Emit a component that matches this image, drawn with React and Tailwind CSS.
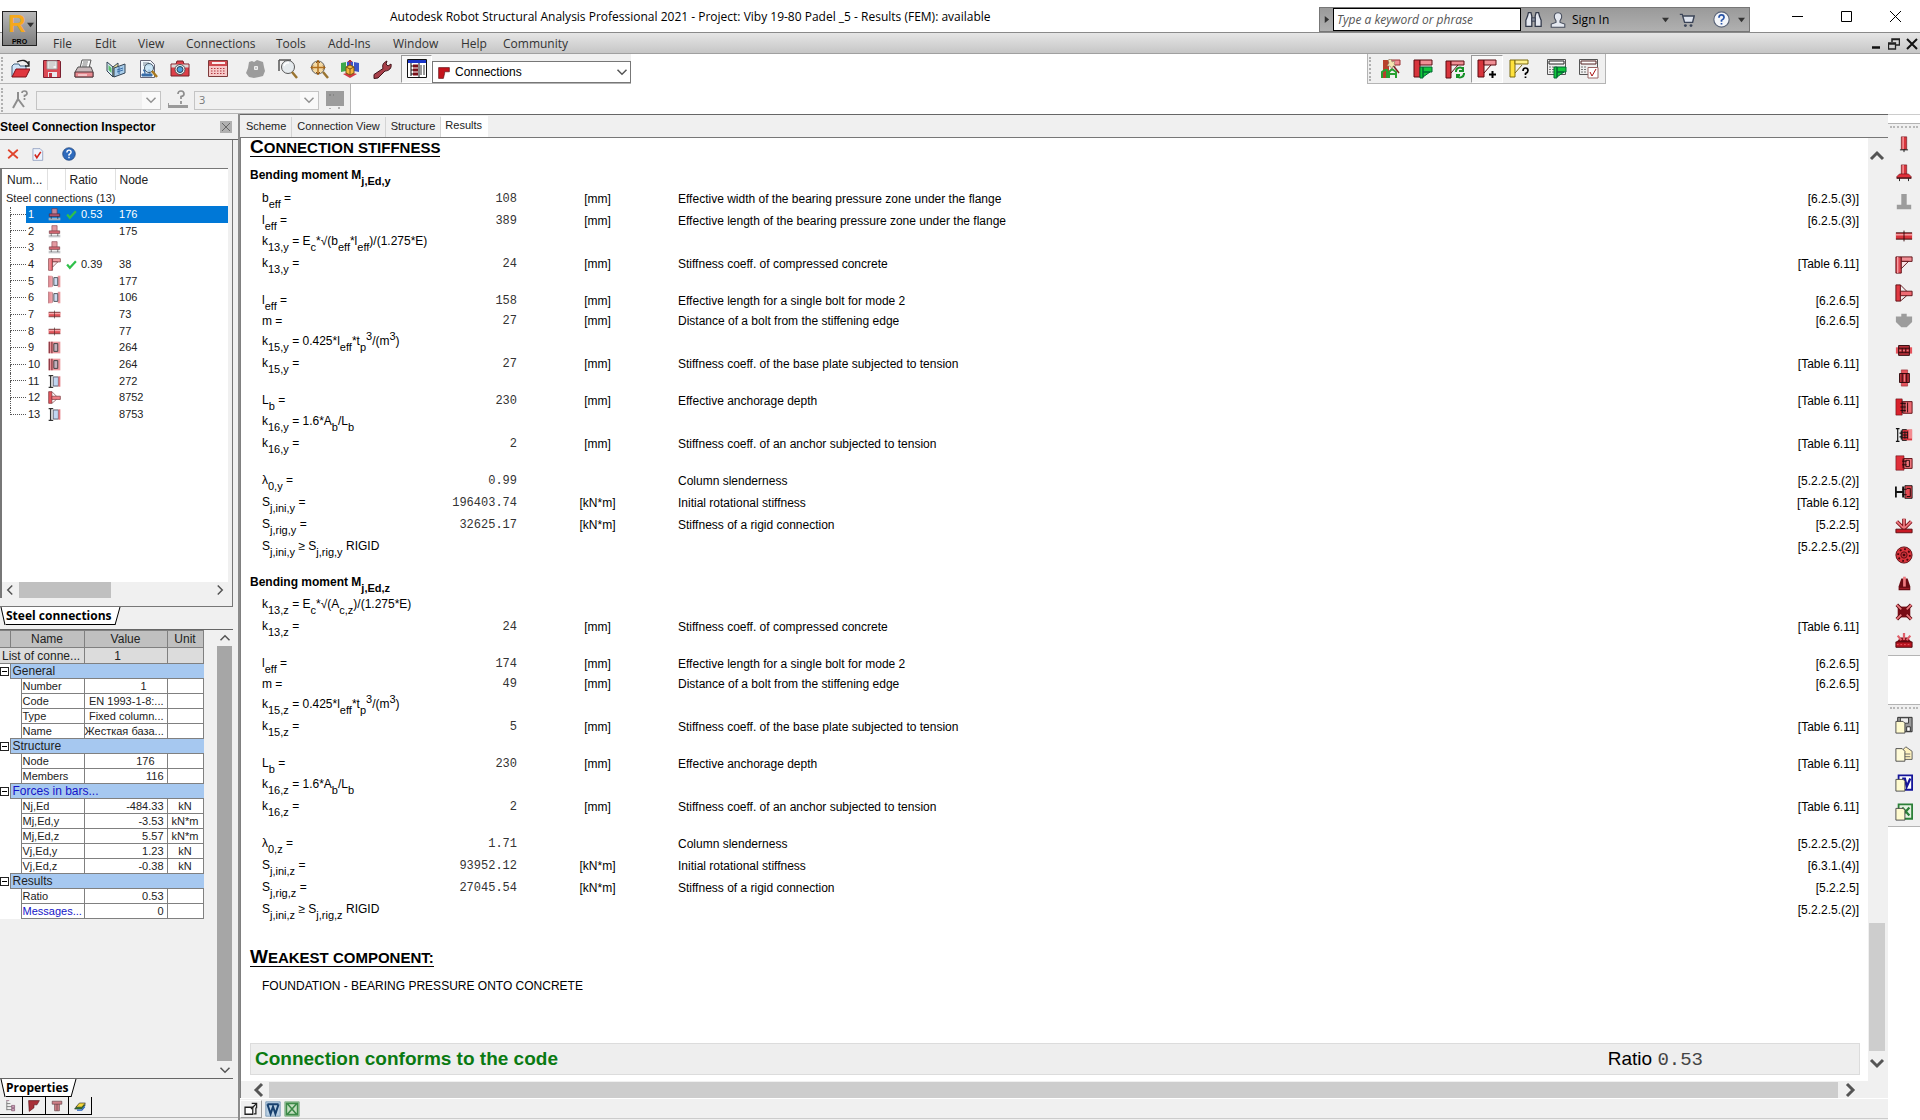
import React from 'react';

// ---------------------------------------------------------------- icons

const RED = '#d8343c';
const DARK = '#5a0a10';

const ICONS = {
  open: (
    <>
      <path d="M2 18V7l2-2h5l1 2h6v4" fill="#cfe4f7" stroke="#44617f" />
      <path d="M2 18l4-8h14l-4 8z" fill="#e0363e" stroke="#7a1018" />
      <path d="M7 3c5-3 10-2 12 3m0-4v5h-4" fill="none" stroke="#222" strokeWidth="1.3" />
    </>
  ),
  save: (
    <>
      <path d="M1.500 1.500h16l1 1v16h-17z" fill="#dc4a55" stroke="#7a2030" />
      <path d="M5 2h10v8H5z" fill="#f4f4f4" stroke="#999" />
      <path d="M6.500 4h7M6.500 6h7M6.500 8h5" stroke="#b0b0b0" />
      <path d="M6 13h9v5H6z" fill="#e8e8ee" />
      <path d="M7 14h3v4H7z" fill="#c03040" />
    </>
  ),
  print: (
    <>
      <path d="M6 9l2-8h9l-2 8z" fill="#fff" stroke="#555" />
      <path d="M9 3h5M8.500 5h5M8 7h5" stroke="#777" />
      <path d="M1 13l3-5h13l2 5v5H1z" fill="#c9b9bb" stroke="#555" />
      <path d="M1 13h18v5H1z" fill="#e88a90" stroke="#553338" />
      <path d="M4 16h9" stroke="#fff" />
    </>
  ),
  book: (
    <>
      <path d="M1 3l6 5v10l-6-6z" fill="#d7e9f5" stroke="#345" />
      <path d="M2.500 6l3 3v5l-3-3z" fill="#5cc06a" />
      <path d="M7 8l5-4v10l-5 4z" fill="#f4e49a" stroke="#345" />
      <path d="M8 9l11-4v9L8 18z" fill="#a9cdea" stroke="#345" />
      <path d="M11 11l6-2M11 13l6-2M13 8v7" stroke="#3a6ea8" />
    </>
  ),
  preview: (
    <>
      <path d="M2.500 1.500h10l4 4v13h-14z" fill="#f3f8fd" stroke="#667" />
      <path d="M5 4h6M5 6h8" stroke="#789" />
      <path d="M4 15h10v2H4zM5 11h2v4M10 11h2v4" fill="#3a6ea8" stroke="#3a6ea8" />
      <circle cx="11" cy="9" r="4.500" fill="#bfe0f5" fillOpacity=".8" stroke="#456" />
      <path d="M14 12l5 6" stroke="#a8781e" strokeWidth="2.500" />
    </>
  ),
  camera: (
    <>
      <path d="M1 5h5l1-3h6l1 3h5v12H1z" fill="#dd4049" stroke="#752028" />
      <path d="M1.500 5.500h17v3h-17z" fill="#d9d9d9" />
      <circle cx="10" cy="10.500" r="5" fill="#e9eef4" stroke="#555" />
      <circle cx="10" cy="10.500" r="3" fill="#4ea0dc" stroke="#245" />
    </>
  ),
  calc: (
    <>
      <path d="M.5 1.500h19v16H.5z" fill="#f6c9c9" stroke="#7c3a3a" />
      <path d="M1 2h18v5H1z" fill="#d04a50" />
      <path d="M4 3h13v2H4z" fill="#fbeeee" />
      <path d="M3 9.500h14M3 12h14M3 14.500h14" stroke="#b23840" strokeDasharray="1.500 1.500" />
    </>
  ),
  greyBlock: (
    <>
      <path d="M3 3l3-1 2 1 3-2 3 1 3 1 1 5 1 4-2 5-4 1-5 1-5-1-3-4 2-5z" fill="#9c9c9c" />
      <path d="M8.500 7.500h3v3h-3z" fill="#c9c9c9" stroke="#efefef" />
    </>
  ),
  lens: (
    <>
      <path d="M1 1h12M1 1v11" stroke="#555" strokeWidth="1.500" />
      <circle cx="10" cy="8" r="6.500" fill="#e6ebee" stroke="#555" />
      <path d="M6 7a4 4 0 0 1 5-3" fill="none" stroke="#fff" strokeWidth="1.500" />
      <path d="M14 13l5 6" stroke="#9a7430" strokeWidth="2.500" />
    </>
  ),
  target: (
    <>
      <circle cx="9" cy="8.500" r="6.500" fill="#f3d9a4" stroke="#666" />
      <path d="M9 1v15M2 8.500h14" stroke="#b3701c" strokeWidth="1.500" />
      <path d="M7 4l2-2 2 2M7 13l2 2 2-2M4 6.500l-2 2 2 2M14 6.500l2 2-2 2" fill="none" stroke="#8a5010" />
      <path d="M14 13l5 6" stroke="#9a7430" strokeWidth="2.500" />
    </>
  ),
  cube: (
    <>
      <path d="M1 4l5-1v9l-5 1z" fill="#3ea84c" />
      <path d="M14 3l5 1v9l-5-1z" fill="#3a55c8" />
      <path d="M7 3l3-2 3 2v5H7z" fill="#3a55c8" />
      <path d="M3 15l7-2 7 2-7 4z" fill="#d33a44" />
      <path d="M6 8l4-2 4 2v6l-4 2-4-2z" fill="#f5b63c" stroke="#7a5410" />
      <path d="M6 8l4 2 4-2M10 10v6" fill="none" stroke="#7a5410" />
      <path d="M10 6V1M8 3l2-2 2 2" stroke="#c22" fill="none" />
    </>
  ),
  wrench: (
    <path
      d="M11 9.500c-1-3 0-6 4-7.500l-1 3 2 2 3-2c1 4-2 7-6 7l-7 7-4 .5v-4z"
      fill="#a8404a"
      stroke="#3f1218"
    />
  ),
  inspector: (
    <>
      <path d="M.5.500h19v18H.5z" fill="#fff" stroke="#111" />
      <path d="M1 1h18v3H1z" fill="#1a35c8" />
      <path d="M4 4v13M4 7h3M4 11h3M4 15h3" stroke="#111" fill="none" />
      <path d="M6 5.500h5v3H6zM6 9.500h5v3H6zM6 13.500h5v3H6z" fill="#7a1018" />
      <path d="M13 7h5M13 9h5M13 11h5M13 13h5M13 15h5" stroke="#333" strokeDasharray="2 1" />
      <path d="M12 4v15" stroke="#111" />
    </>
  ),
  knee: (
    <>
      <path d="M1 1h6v18H1z" fill="#e04a54" stroke={DARK} />
      <path d="M7 1h12v5H7z" fill="#f08f95" stroke={DARK} />
      <path d="M7 14l8-8H7z" fill="#fbe4e5" stroke={DARK} />
      <path d="M3 1v18" stroke="#f6a0a5" strokeWidth="1.500" />
    </>
  ),
  kneeAuto: (
    <>
      <path d="M2 1h6v18H2z" fill="#b8402c" />
      <path d="M8 1h11v5H8z" fill="#f08f95" stroke="#933" />
      <path d="M1 19v-6l3-2h2v8M8 19v-6l3-3 4 3v6M8 15h7" fill="none" stroke="#28a030" strokeWidth="2" />
      <path d="M11 5l7 9" stroke="#7c2020" strokeWidth="1.500" />
      <path d="M10 0l1 3 3-1-1 3 2 2-3 0-1 3-2-3-3 0 2-3-1-3z" fill="#f4e7b0" stroke="#876" strokeWidth=".6" />
    </>
  ),
  kneeGreen: (
    <>
      <path d="M1 1h6v17H1z" fill={RED} stroke={DARK} />
      <path d="M7 1h12v5H7z" fill="#f08f95" stroke={DARK} />
      <path d="M7 8h3v11H7zM10 8h9v5h-9zM10 18l7-5h-7z" fill="#12c83c" stroke="#063" />
    </>
  ),
  kneeRefresh: (
    <>
      <path d="M1 2h5v17H1z" fill={RED} stroke={DARK} />
      <path d="M6 2h13v4H6zM6 14l7-8" fill="#f08f95" stroke={DARK} />
      <path d="M11 13a4 4 0 0 1 7-3m0-2v4h-4M19 14a4 4 0 0 1-7 3m0 2v-3h3" fill="none" stroke="#169128" strokeWidth="2" />
    </>
  ),
  kneePlus: (
    <>
      <path d="M1 1h6v17H1z" fill={RED} stroke={DARK} />
      <path d="M7 1h12v5H7zM7 14l7-8" fill="#f08f95" stroke={DARK} />
      <path d="M15.500 12v7M12 15.500h7" stroke="#000" strokeWidth="2" />
    </>
  ),
  kneeHelp: (
    <>
      <path d="M1 1h5v17H1z" fill="#ffe23c" stroke="#7a6a10" />
      <path d="M6 1h13v4H6zM6 14l7-8" fill="#fff08a" stroke="#7a6a10" />
      <path d="M14 12q0-3 2.500-3T19 11.500q0 2-2.500 3V16M16.500 17.500V19" fill="none" stroke="#000" strokeWidth="1.700" />
    </>
  ),
  calcGreen: (
    <>
      <path d="M.5.500h18v15H.5z" fill="#eee" stroke="#555" />
      <path d="M2 2h15v3H2z" fill="#fff" stroke="#222" />
      <path d="M2 8h8M2 10.500h6M2 13h6" stroke="#777" strokeDasharray="2 1" />
      <path d="M7 8h3v11H7zM10 8h9v5h-9zM10 18l7-5h-7z" fill="#12c83c" stroke="#063" />
    </>
  ),
  calcCheck: (
    <>
      <path d="M.5.500h18v15H.5z" fill="#eee" stroke="#555" />
      <path d="M2 2h15v3H2z" fill="#fff" stroke="#522" />
      <path d="M2 8h6M2 10.500h6M2 13h6" stroke="#777" strokeDasharray="2 1" />
      <path d="M9 8.500h10V19H9z" fill="#fff" stroke="#966" />
      <path d="M11 13l2 4 4-7" fill="none" stroke="#a11" />
    </>
  ),
  support: (
    <>
      <path d="M8 2v7M8 9l-5 9M8 9l6 8" stroke="#8d8d8d" strokeWidth="2" fill="none" />
      <path d="M12 3q0-2 2.500-2T17 3.500q0 1.500-2.500 2V7M14.500 8v2" fill="none" stroke="#8d8d8d" strokeWidth="1.700" />
    </>
  ),
  plate: (
    <>
      <path d="M0 15h20v3H0z" fill="#9a9a9a" />
      <path d="M10 4q0-3 3-3t3 3q0 2-3 2.500V9M13 11v3M0 13v3" fill="none" stroke="#8d8d8d" strokeWidth="1.700" />
    </>
  ),
  greySquare: (
    <>
      <path d="M1 1h18v15H1z" fill="#9c9c9c" />
      <path d="M4 5h2M8 5h1M5 18v1M14 17v2" stroke="#707070" />
    </>
  ),
  // right hand strip
  column: (
    <>
      <path d="M7 2h6v14H7z" fill={RED} stroke={DARK} strokeWidth=".6" />
      <path d="M9 2v14" stroke="#f7a0a4" strokeWidth="1.500" />
      <path d="M5.500 16.500h9M10 16v3" stroke="#111" />
    </>
  ),
  columnBase: (
    <>
      <path d="M7 1h6v11H7z" fill={RED} stroke={DARK} strokeWidth=".6" />
      <path d="M9 1v11" stroke="#f7a0a4" strokeWidth="1.500" />
      <path d="M2 14l3-3h10l3 3v2H2z" fill="#e0303a" stroke={DARK} strokeWidth=".6" />
      <path d="M2 15.500h16M5 16v3M15 16v3" stroke="#111" />
    </>
  ),
  greyTee: <path d="M7 1h6v12h5v5H2v-5h5z" fill="#9c9c9c" />,
  splice: (
    <>
      <path d="M1 6.500h18v7H1z" fill={RED} />
      <path d="M1 8.500h18" stroke="#f59a9e" strokeWidth="2" />
      <path d="M1 6.500h18M1 13.500h18M10 4v12" stroke="#300" />
    </>
  ),
  tee: (
    <>
      <path d="M1 1h5v18H1z" fill="#e03a42" stroke={DARK} />
      <path d="M6 8h13v5H6zM6 1l7 7M6 19l7-6" fill="#ee6a72" stroke={DARK} />
    </>
  ),
  greyTank: <path d="M7 2h6v3h6v6l-6 6H7l-6-6V5h6z" fill="#9c9c9c" />,
  pipeH: (
    <>
      <path d="M1 7h18v7H1z" fill="#e4545c" />
      <path d="M4 5h12v11H4z" fill="#b7313a" stroke="#2a0508" />
      <path d="M4 8h12M4 13h12M8 8v5M12 8v5" stroke="#2a0508" />
      <path d="M5 10.500h10" stroke="#f08a90" strokeDasharray="2 2" />
    </>
  ),
  pipeV: (
    <>
      <path d="M7 1h7v18H7z" fill="#e4545c" stroke="#8a2028" strokeWidth=".6" />
      <path d="M5 5h11v10H5z" fill="#b7313a" stroke="#2a0508" />
      <path d="M8 5v10M13 5v10" stroke="#2a0508" />
      <path d="M10.500 6v8" stroke="#f08a90" />
    </>
  ),
  webPlate: (
    <>
      <path d="M1 1h7v18H1z" fill="#d9222c" stroke={DARK} strokeWidth=".6" />
      <path d="M9 4h10v13H9z" fill="#ee6a72" stroke={DARK} />
      <path d="M8 3v14M11 5v11M14 5v11M6 6h6M6 10h6M6 14h6" stroke="#1a0305" />
    </>
  ),
  beamClip: (
    <>
      <path d="M3 3v14M1 3h4M1 17h4M7 5v10M5 8h6M5 12h6" stroke="#111" strokeWidth="1.300" />
      <path d="M8 4h11v12H8z" fill="#d9333c" />
      <path d="M8 4v12M11 6v8M8 4h5M8 16h5M8 7h6M8 10h6M8 13h6M14 6v8" stroke="#111" />
      <path d="M15 4h4v10h-4z" fill="#f38a8f" />
    </>
  ),
  endPlate: (
    <>
      <path d="M1 2h9v16H1z" fill="#e0303a" stroke={DARK} strokeWidth=".6" />
      <path d="M10 5h9v11h-9z" fill="#f0767d" stroke={DARK} />
      <path d="M9 5v11M12 7h4v7h-4zM8 8h5M8 12h5" stroke="#1a0305" fill="none" />
    </>
  ),
  hBeam: (
    <>
      <path d="M1 4v12M1 10h8M9 4v12" stroke="#111" strokeWidth="2" />
      <path d="M11 3h8v14h-8z" fill="#e64a52" stroke="#111" />
      <path d="M13 6h4v9h-4M8 7h5M8 13h5" stroke="#1a0305" fill="none" />
    </>
  ),
  fan: (
    <>
      <path d="M10 13V2M10 13L2 5M10 13l8-8" stroke="#7a0a12" strokeWidth="4" />
      <path d="M10 13V2M10 13L2 5M10 13l8-8" stroke="#ee7a80" strokeWidth="2" />
      <path d="M1 13.500h18v4H1z" fill="#c81a24" stroke={DARK} />
    </>
  ),
  flange: (
    <>
      <circle cx="10" cy="10" r="9" fill="#d9343c" stroke={DARK} />
      <circle cx="10" cy="10" r="6.500" fill="none" stroke="#4a060b" strokeWidth="2" strokeDasharray="2 3" />
      <circle cx="10" cy="10" r="3.500" fill="#c03038" stroke={DARK} />
      <circle cx="10" cy="10" r="1.500" fill="#4a060b" />
    </>
  ),
  pyramid: (
    <>
      <path d="M7 5h7l3 9v4H4v-4z" fill="#6a0c14" />
      <path d="M9 3h3v11H9z" fill="#ee7a80" />
      <path d="M5 16h11" stroke="#a8222c" />
    </>
  ),
  cross: (
    <>
      <path d="M3 4h14v12H3z" fill="#780c15" />
      <path d="M2 2l5 5M18 2l-5 5M2 18l5-5M18 18l-5-5" stroke="#5a0a10" strokeWidth="4" />
      <path d="M2 2l5 5M18 2l-5 5M2 18l5-5M18 18l-5-5" stroke="#ee7a80" strokeWidth="2" />
    </>
  ),
  dome: (
    <>
      <path d="M1 12l5-6h8l5 6z" fill="#780c15" />
      <path d="M10 9V1M7 9L3 4M13 9l4-5" stroke="#e0606a" strokeWidth="2.500" />
      <path d="M1 11h18v6H1z" fill="#b8141f" stroke="#4a060b" />
      <path d="M2 14h16" stroke="#ee6068" strokeDasharray="2 2" />
    </>
  ),
  pageSave: (
    <>
      <path d="M3 1.500h16v16H3z" fill="#9a9a9a" stroke="#222" />
      <path d="M6 2h9v6H6z" fill="#eee" stroke="#333" />
      <path d="M13 12h4v5h-4z" fill="#fff" stroke="#222" />
      <path d="M1 6h8l2 2v11H1z" fill="#fffbcf" stroke="#444" />
    </>
  ),
  pageMail: (
    <>
      <path d="M7 7l5-5 7 5v9H7z" fill="#fff3c0" stroke="#555" />
      <path d="M10 10h7M10 13h7" stroke="#666" />
      <path d="M1 4h7l3 3v11H1z" fill="#fffbd8" stroke="#444" />
    </>
  ),
  pageWord: (
    <>
      <path d="M4 1.500h15v16H4z" fill="#fff" stroke="#15159a" strokeWidth="2" />
      <path d="M8 5h3l2 9 4-9" fill="none" stroke="#15159a" strokeWidth="2.500" />
      <path d="M1 6h8l2 2v11H1z" fill="#fffbcf" stroke="#444" />
    </>
  ),
  pageExcel: (
    <>
      <path d="M4 1.500h15v16H4z" fill="#e6f2e2" stroke="#2c8038" strokeWidth="2" />
      <path d="M8 5l8 9M16 5l-8 9" stroke="#2c8038" strokeWidth="2.500" />
      <path d="M1 6h8l2 2v11H1z" fill="#fffbcf" stroke="#444" />
    </>
  ),
  // connection list
  base: (
    <>
      <path d="M6 1h8v9H6z" fill="#e08a92" stroke="#7c2a34" />
      <path d="M2 9h16v4H2z" fill="#d0505c" stroke="#5a1a22" />
      <path d="M1 15h18v4H1z" fill="#b9bcbf" />
      <path d="M5 13v4M15 13v4" stroke="#222" />
    </>
  ),
  clip: (
    <>
      <path d="M1 1h5v18H1zM15 1h4v18h-4z" fill="#e8868e" />
      <path d="M7 2v16M1 1v18" stroke="#8a2530" />
      <path d="M9 4h6v12H9z" fill="#c6d6f0" stroke="#33363f" strokeWidth="1.500" />
    </>
  ),
  clipDark: (
    <>
      <path d="M1 1h18v18H1z" fill="#e8868e" />
      <path d="M6 1v18M2 1v18" stroke="#7a1822" strokeWidth="2" />
      <path d="M9 4h6v12H9z" fill="#b9a4b4" stroke="#222" strokeWidth="1.500" />
    </>
  ),
  clipBeam: (
    <>
      <path d="M1 1h7M1 19h7M4 1v18" stroke="#111" strokeWidth="2" />
      <path d="M8 3h8v14H8z" fill="#b7d0f0" stroke="#445" strokeWidth="1.500" />
      <path d="M16 2h3v16h-3z" fill="#e0606a" />
    </>
  ),
  // inspector and window bits
  cross2: <path d="M2 3l16 14M18 3L2 17" stroke="#e0442c" strokeWidth="3" fill="none" />,
  docCheck: (
    <>
      <path d="M3 1h11l4 4v14H3z" fill="#eef3fc" stroke="#7486b0" />
      <path d="M6 10l3 5 6-9" fill="none" stroke="#d2261c" strokeWidth="2.500" />
    </>
  ),
  help: (
    <>
      <circle cx="10" cy="10" r="9" fill="#2f6bbd" stroke="#1c4076" />
      <path d="M7 8q0-3.500 3-3.500T13 7.500q0 1.500-3 3.500v1.500M10 14v2" fill="none" stroke="#fff" strokeWidth="2" />
    </>
  ),
  check: <path d="M2 10l5 6L18 4" fill="none" stroke="#2fc04a" strokeWidth="4" />,
  binoculars: (
    <>
      <path d="M3 6l1-4h3l1 4v12H1V11zM17 6l-1-4h-3l-1 4v12h7V11z" fill="#e4e8f0" stroke="#333a4a" strokeWidth="1.500" />
      <path d="M8 8h4v4H8z" fill="#8a90a0" stroke="#333a4a" />
    </>
  ),
  user: (
    <path
      d="M10 1c4 0 5 3 4.500 6-.5 2-1.500 3-2 4v2l6 2v4h-17v-4l6-2v-2c-.5-1-1.500-2-2-4C5 4 6 1 10 1z"
      fill="#e4e8f0"
      stroke="#444b5a"
      strokeWidth="1.300"
    />
  ),
  cart: (
    <>
      <path d="M1 3h3l3 10h10l2-8H5" fill="#dfe4ee" stroke="#3c4558" strokeWidth="1.800" />
      <circle cx="8" cy="17" r="1.800" fill="#3c4558" />
      <circle cx="15" cy="17" r="1.800" fill="#3c4558" />
    </>
  ),
  helpLight: (
    <>
      <circle cx="10" cy="10" r="9" fill="#f4f6fa" stroke="#5a6478" strokeWidth="1.300" />
      <path d="M7 8q0-3.500 3-3.500T13 7.500q0 1.500-3 3.500v1.500M10 14v2" fill="none" stroke="#2a55a8" strokeWidth="2" />
    </>
  ),
  // bottom buttons
  treeTab: (
    <>
      <path d="M3 2v15M3 6h6M3 11h8M3 16h8" stroke="#777" strokeWidth="1.500" fill="none" />
      <path d="M2 1h5M11 9h5v4h-5zM11 14h5v4h-5z" fill="#c8a0b8" stroke="#74405c" />
    </>
  ),
  flagTab: <path d="M1 1h18l-4 7h-5v5l-8 6z" fill="#a83038" stroke="#501018" />,
  flange2: <path d="M1 1h18v7h-8v3l-2 8H1z" fill="#c4141c" stroke="#500a0e" />,
  boltTab: <path d="M2 2h16v5h-4v11H6V7H2zM6 7h8M10 7v11" fill="#d08088" stroke="#54383c" />,
  layersTab: (
    <>
      <path d="M1 15l6-7h12l-6 7z" fill="#2a8a3a" stroke="#222" />
      <path d="M3 12l6-7h10l-6 7z" fill="#f2d63a" stroke="#222" />
      <path d="M5 17h8l5-6" fill="none" stroke="#2460c0" strokeWidth="2" />
    </>
  ),
  popOut: (
    <>
      <path d="M1.500 7.500h11v10h-11z" fill="#fff" stroke="#222" strokeWidth="1.800" />
      <path d="M10 10l7-7M11 2h7v7M17 8v9h-3" fill="none" stroke="#222" strokeWidth="1.800" />
    </>
  ),
  word: (
    <>
      <path d="M1 1h18v18H1z" fill="#b9cfe2" stroke="#6f90b0" />
      <path d="M3 4l4 12 3-9 3 9 4-12M3 4h14" fill="none" stroke="#17406e" strokeWidth="2.500" />
    </>
  ),
  excel: (
    <>
      <path d="M1 1h18v18H1z" fill="#c4dec0" stroke="#6fa476" />
      <path d="M4 3l12 14M16 3L4 17M3 3h14v14H3z" fill="none" stroke="#3c8a48" strokeWidth="2" />
    </>
  ),
};

const Icon = ({ name, className = 'size-5' }) => (
  <svg viewBox="0 0 20 20" className={`shrink-0 ${className}`} fill="none" aria-hidden="true">
    {ICONS[name]}
  </svg>
);

const ROTATE = { up: '', right: 'rotate-90', down: 'rotate-180', left: '-rotate-90' };

const Chevron = ({ dir, big }) => (
  <svg viewBox="0 0 16 16" className={`shrink-0 ${ROTATE[dir]} ${big ? 'size-4' : 'size-3'}`} fill="none" aria-hidden="true">
    <path d="M2 11l6-6 6 6" stroke="#555" strokeWidth={big ? 3 : 2} />
  </svg>
);

const Triangle = ({ dir = 'down' }) => (
  <svg viewBox="0 0 8 8" className={`size-[7px] shrink-0 ${dir === 'right' ? '-rotate-90' : ''}`} aria-hidden="true">
    <path d="M0 2h8L4 7z" fill="#333" />
  </svg>
);

// ---------------------------------------------------------------- data

const MENU = [
  ['File', 'w-[42px]'],
  ['Edit', 'w-[43px]'],
  ['View', 'w-[48px]'],
  ['Connections', 'w-[90px]'],
  ['Tools', 'w-[52px]'],
  ['Add-Ins', 'w-[65px]'],
  ['Window', 'w-[68px]'],
  ['Help', 'w-[42px]'],
  ['Community', 'w-[80px]'],
];

const CONNECTIONS = [
  { id: 1, icon: 'base', ratio: '0.53', node: '176' },
  { id: 2, icon: 'base', node: '175' },
  { id: 3, icon: 'base', node: '' },
  { id: 4, icon: 'knee', ratio: '0.39', node: '38' },
  { id: 5, icon: 'clip', node: '177' },
  { id: 6, icon: 'clip', node: '106' },
  { id: 7, icon: 'splice', node: '73' },
  { id: 8, icon: 'splice', node: '77' },
  { id: 9, icon: 'clipDark', node: '264' },
  { id: 10, icon: 'clipDark', node: '264' },
  { id: 11, icon: 'clipBeam', node: '272' },
  { id: 12, icon: 'tee', node: '8752' },
  { id: 13, icon: 'clipBeam', node: '8753' },
];

const PROPERTIES = [
  { title: 'General', rows: [['Number', '1', '', 'pr-5'], ['Code', 'EN 1993-1-8:...', ''], ['Type', 'Fixed column...', ''], ['Name', 'Жесткая база...', '']] },
  { title: 'Structure', rows: [['Node', '176', '', 'pr-3'], ['Members', '116', '']] },
  {
    title: 'Forces in bars...',
    link: true,
    rows: [['Nj,Ed', '-484.33', 'kN'], ['Mj,Ed,y', '-3.53', 'kN*m'], ['Mj,Ed,z', '5.57', 'kN*m'], ['Vj,Ed,y', '1.23', 'kN'], ['Vj,Ed,z', '-0.38', 'kN']],
  },
  { title: 'Results', rows: [['Ratio', '0.53', ''], ['Messages...', '0', '']] },
];

// _{..} is a subscript, ^{..} a superscript
const results = (axis, k13, v) => [
  ...k13,
  [`k_{13,${axis}} =`, v.k13, '[mm]', 'Stiffness coeff. of compressed concrete', '[Table 6.11]'],
  null,
  ['l_{eff} =', v.leff, '[mm]', 'Effective length for a single bolt for mode 2', '[6.2.6.5]'],
  ['m =', v.m, '[mm]', 'Distance of a bolt from the stiffening edge', '[6.2.6.5]'],
  [`k_{15,${axis}} = 0.425*l_{eff}*t_{p}^{3}/(m^{3})`],
  [`k_{15,${axis}} =`, v.k15, '[mm]', 'Stiffness coeff. of the base plate subjected to tension', '[Table 6.11]'],
  null,
  ['L_{b} =', '230', '[mm]', 'Effective anchorage depth', '[Table 6.11]'],
  [`k_{16,${axis}} = 1.6*A_{b}/L_{b}`],
  [`k_{16,${axis}} =`, '2', '[mm]', 'Stiffness coeff. of an anchor subjected to tension', '[Table 6.11]'],
  null,
  [`λ_{0,${axis}} =`, v.lambda, '', 'Column slenderness', '[5.2.2.5.(2)]'],
  [`S_{j,ini,${axis}} =`, v.ini, '[kN*m]', 'Initial rotational stiffness', v.iniRef],
  [`S_{j,rig,${axis}} =`, v.rig, '[kN*m]', 'Stiffness of a rigid connection', '[5.2.2.5]'],
  [`S_{j,ini,${axis}} ≥ S_{j,rig,${axis}} RIGID`, '', '', '', '[5.2.2.5.(2)]'],
];

const RESULTS_Y = results(
  'y',
  [
    ['b_{eff} =', '108', '[mm]', 'Effective width of the bearing pressure zone under the flange', '[6.2.5.(3)]'],
    ['l_{eff} =', '389', '[mm]', 'Effective length of the bearing pressure zone under the flange', '[6.2.5.(3)]'],
    ['k_{13,y} = E_{c}*√(b_{eff}*l_{eff})/(1.275*E)'],
  ],
  { k13: '24', leff: '158', m: '27', k15: '27', lambda: '0.99', ini: '196403.74', iniRef: '[Table 6.12]', rig: '32625.17' }
);

const RESULTS_Z = results('z', [['k_{13,z} = E_{c}*√(A_{c,z})/(1.275*E)']], {
  k13: '24', leff: '174', m: '49', k15: '5', lambda: '1.71', ini: '93952.12', iniRef: '[6.3.1.(4)]', rig: '27045.54',
});

// ---------------------------------------------------------------- header

const TitleBar = () => (
  <header className="relative flex h-8 shrink-0 items-start bg-white">
    <button aria-label="Application menu" className="absolute top-[11px] left-[2px] z-10 flex h-[35px] w-[35px] flex-col items-start border border-[#222] bg-linear-to-b from-[#b8b8b8] to-[#7d7d7d] font-['Liberation_Sans',sans-serif]">
      <span className="flex w-full items-center">
        <span className="w-6 pl-1 text-[24px] leading-6 font-bold text-[#f5a81c]">R</span>
        <Triangle />
      </span>
      <span className="mt-0.5 w-full text-center text-[7px] leading-[7px] font-bold text-black">PRO</span>
    </button>
    <h1 className="ml-[390px] grow pt-[9px] text-[12px] leading-4 text-black">
      Autodesk Robot Structural Analysis Professional 2021 - Project: Viby 19-80 Padel _5 - Results (FEM): available
    </h1>
    <div className="mt-[7px] flex h-[25px] w-[431px] items-center border border-[#777] bg-linear-to-b from-[#9a9a9a] to-[#b0b0b0] text-[12px]">
      <button aria-label="Collapse search" className="flex w-[13px] justify-center"><Triangle dir="right" /></button>
      <input aria-label="Search" placeholder="Type a keyword or phrase" className="h-[23px] w-[188px] border border-black bg-white px-[3px] italic placeholder:text-[#555]" />
      <button aria-label="Find" className="ml-1 flex"><Icon name="binoculars" className="size-[17px]" /></button>
      <button className="ml-2 flex grow items-center gap-1.5"><Icon name="user" className="size-4" />Sign In</button>
      <button aria-label="Sign in options"><Triangle /></button>
      <button aria-label="Store" className="ml-2.5"><Icon name="cart" className="size-4" /></button>
      <button aria-label="Help" className="ml-[18px]"><Icon name="helpLight" className="size-[17px]" /></button>
      <button aria-label="Help options" className="mr-1 ml-2"><Triangle /></button>
    </div>
    <div className="ml-[42px] flex h-8 w-[128px] items-center gap-[38px]">
      <button aria-label="Minimize"><svg viewBox="0 0 11 11" className="size-[11px]"><path d="M0 5.500h11" stroke="#000" /></svg></button>
      <button aria-label="Maximize"><svg viewBox="0 0 11 11" className="size-[11px]"><path d="M.5.500h10v10H.5z" fill="none" stroke="#000" /></svg></button>
      <button aria-label="Close"><svg viewBox="0 0 11 11" className="size-[11px]"><path d="M0 0l11 11M11 0L0 11" stroke="#000" /></svg></button>
    </div>
  </header>
);

const MenuBar = () => (
  <nav className="flex h-[22px] shrink-0 items-center border-t border-b border-t-[#8a8a8a] border-b-[#a0a0a0] bg-linear-to-b from-[#e6e6e6] to-[#c6c6c6] pt-px pl-[53px] text-[12px] text-[#333]">
    {MENU.map(([label, width]) => (
      <button key={label} className={`text-left ${width}`}>{label}</button>
    ))}
    <div className="mr-0.5 ml-auto flex items-center gap-1.5">
      <button aria-label="Minimize document"><svg viewBox="0 0 12 12" className="size-3"><path d="M2 9.500h8" stroke="#111" strokeWidth="2.500" /></svg></button>
      <button aria-label="Restore document">
        <svg viewBox="0 0 12 12" className="size-3" fill="none" stroke="#222"><path d="M4 4V1h7.500v6H8M4 1.500h7.500" strokeWidth="1.500" /><path d="M.5 5h7v6h-7zM.5 6h7" strokeWidth="1.300" /></svg>
      </button>
      <button aria-label="Close document"><svg viewBox="0 0 12 12" className="size-3"><path d="M1 1l10 10M11 1L1 11" stroke="#111" strokeWidth="2" /></svg></button>
    </div>
  </nav>
);

const ToolButton = ({ icon, label, active, width = 'w-8' }) => (
  <button aria-label={label} className={`flex h-7 items-center justify-center ${width} ${active ? 'border border-[#999] border-r-white border-b-white bg-[#f7f7f7]' : ''}`}>
    <Icon name={icon} />
  </button>
);

const Grip = () => <span className="ml-px h-6 w-[3px] shrink-0 border-l-2 border-dotted border-[#b0b0b0]" />;

const Select = ({ label, value }) => (
  <div className="relative h-[19px] w-[125px]">
    <select disabled aria-label={label} className="h-[19px] w-full appearance-none border border-[#c4c4c4] bg-[#f0f0f0] pl-1 text-[#777] opacity-100">
      <option>{value}</option>
    </select>
    <span className="pointer-events-none absolute top-px right-px flex h-[17px] w-[18px] items-center justify-center bg-white opacity-60"><Chevron dir="down" /></span>
  </div>
);

const Toolbars = () => (
  <div className="flex h-[60px] shrink-0 items-start bg-white">
    <div>
      <div className="flex h-[30px] w-[631px] items-center border-b border-[#b4b4b4] bg-[#f0f0f0]">
        <Grip />
        <ToolButton icon="open" label="Open" />
        <ToolButton icon="save" label="Save" />
        <ToolButton icon="print" label="Print" />
        <ToolButton icon="book" label="Printout composition" />
        <ToolButton icon="preview" label="Preview" />
        <ToolButton icon="camera" label="Screen capture" />
        <span className="w-1.5" />
        <ToolButton icon="calc" label="Calculations" />
        <span className="w-1.5" />
        <ToolButton icon="greyBlock" label="Solid" />
        <ToolButton icon="lens" label="Zoom window" width="w-[31px]" />
        <ToolButton icon="target" label="Zoom all" width="w-[31px]" />
        <ToolButton icon="cube" label="View" />
        <ToolButton icon="wrench" label="Tools" width="w-[31px]" />
        <span className="w-1" />
        <ToolButton icon="inspector" label="Inspector" active width="w-[31px]" />
        <div className="relative mt-1.5 grow text-[12px]">
          <select aria-label="Layout" className="h-[22px] w-full appearance-none border border-[#777] bg-white pl-[22px] font-['Liberation_Sans',sans-serif]">
            <option>Connections</option>
          </select>
          <span className="pointer-events-none absolute top-[6px] left-[6px]"><Icon name="flange2" className="size-3" /></span>
          <span className="pointer-events-none absolute top-[5px] right-[3px]"><Chevron dir="down" /></span>
        </div>
      </div>
      <div className="flex h-[30px] w-[351px] items-center border-r border-b border-[#b4b4b4] bg-[#f0f0f0] pt-[3px] text-[11px] text-[#777]">
        <Grip />
        <button aria-label="Supports" className="flex w-8 justify-center"><Icon name="support" /></button>
        <Select label="Support" value="" />
        <button aria-label="Plates" className="flex w-[33px] justify-center"><Icon name="plate" /></button>
        <Select label="Case" value="3" />
        <button aria-label="Stop" className="ml-1.5"><Icon name="greySquare" /></button>
      </div>
    </div>
    <div className="mr-[314px] ml-auto flex h-[30px] w-[239px] items-center border border-t-0 border-[#b4b4b4] bg-[#f0f0f0]">
      <Grip />
      <span className="w-[3px]" />
      <ToolButton icon="kneeAuto" label="Automatic connection" />
      <ToolButton icon="kneeGreen" label="New connection" />
      <ToolButton icon="kneeRefresh" label="Update connection" />
      <ToolButton icon="kneePlus" label="Add connection" active />
      <ToolButton icon="kneeHelp" label="Connection type" />
      <span className="w-1.5" />
      <ToolButton icon="calcGreen" label="Calculate connection" />
      <ToolButton icon="calcCheck" label="Verify connection" />
    </div>
  </div>
);

// ---------------------------------------------------------------- left side

const FolderTab = ({ children }) => (
  <div className="flex h-[18px] w-fit items-center border-b border-black bg-white font-['Open_Sans',sans-serif] text-[12px] font-bold text-black">
    <svg viewBox="0 0 6 18" className="h-[18px] w-1.5"><path d="M0 0v18h6L1 0z" fill="#f0f0f0" /><path d="M1 0l4 18" stroke="#000" /></svg>
    {children}
    <svg viewBox="0 0 9 18" className="h-[18px] w-[9px]"><path d="M8 0L3 18h6V0z" fill="#f0f0f0" /><path d="M8 0L3 18" stroke="#000" /></svg>
  </div>
);

const ConnectionTree = () => (
  <table className="w-full table-fixed border-collapse text-[11px] leading-none text-[#222]">
    <colgroup>
      <col className="w-6" /><col className="w-[21px]" /><col className="w-[18px]" /><col className="w-[14px]" /><col className="w-[36px]" /><col />
    </colgroup>
    <thead>
      <tr className="h-[21px] text-left text-[12px]">
        <th colSpan={2} className="pl-[5px] font-normal">Num...</th>
        <th aria-label="Type" className="border-x border-[#e0e0e0]" />
        <th colSpan={2} className="border-r border-[#e0e0e0] pl-1 font-normal">Ratio</th>
        <th className="pl-1 font-normal">Node</th>
      </tr>
    </thead>
    <tbody>
      <tr className="h-4"><td colSpan={6} className="pl-1">Steel connections (13)</td></tr>
      {CONNECTIONS.map((c, i) => (
        <tr key={c.id} className={`h-[17px] nth-[3n]:h-4 ${i === 0 ? 'text-white' : ''}`}>
          <td className="pl-2">
            <span className="flex h-4 flex-col">
              <span className="h-2 border-b border-l border-dotted border-[#555]" />
              {i < CONNECTIONS.length - 1 && <span className="h-2 border-l border-dotted border-[#555]" />}
            </span>
          </td>
          <td className={`pl-0.5 ${i === 0 ? 'bg-[#0078d7]' : ''}`}>{c.id}</td>
          <td className={i === 0 ? 'bg-[#0078d7]' : ''}><Icon name={c.icon} className="ml-px size-[13px] opacity-85" /></td>
          <td className={i === 0 ? 'bg-[#0078d7]' : ''}>{c.ratio && <Icon name="check" className="ml-px size-[11px]" />}</td>
          <td className={`pl-0.5 ${i === 0 ? 'bg-[#0078d7]' : ''}`}>{c.ratio}</td>
          <td className={`pl-1 ${i === 0 ? 'bg-[#0078d7]' : ''}`}>{c.node}</td>
        </tr>
      ))}
    </tbody>
  </table>
);

const PropertyTable = () => (
  <table className="w-[203px] shrink-0 table-fixed border-collapse self-start text-[11px] leading-none text-[#222]">
    <colgroup>
      <col className="w-2.5" /><col className="w-[11px]" /><col className="w-[63px]" /><col className="w-[83px]" /><col className="w-[36px]" />
    </colgroup>
    <thead>
      <tr className="h-[17px] bg-[#c0c0c0] text-[12px]">
        <th className="border border-l-0 border-[#808080]" aria-label="Group" />
        <th colSpan={2} className="border border-[#808080] font-normal">Name</th>
        <th className="border border-[#808080] font-normal">Value</th>
        <th className="border border-[#808080] font-normal">Unit</th>
      </tr>
    </thead>
    <tbody>
      <tr className="h-4 bg-[#dcdcdc] text-[12px]">
        <td colSpan={3} className="border border-l-0 border-[#808080] pl-0.5 whitespace-nowrap">List of conne...</td>
        <td className="border border-[#808080] pr-4 text-center">1</td>
        <td className="border border-[#808080]" />
      </tr>
      {PROPERTIES.map((group) => (
        <React.Fragment key={group.title}>
          <tr className="h-[15px] bg-white text-[12px]">
            <td>
              <button aria-label={`Collapse ${group.title}`} className="flex size-[9px] items-center justify-center border border-[#222]">
                <span className="h-px w-[5px] bg-black" />
              </button>
            </td>
            <td colSpan={4} className={`border border-[#808080] border-r-[#a6c8f0] bg-[#a6c8f0] pl-0.5 ${group.link ? 'text-[#1414c8]' : ''}`}>{group.title}</td>
          </tr>
          {group.rows.map(([name, value, unit, pad = 'pr-[3px]']) => (
            <tr key={name} className="h-[15px] bg-white">
              <td />
              <td />
              <td className={`border border-[#808080] pl-px whitespace-nowrap ${name === 'Messages...' ? 'text-[#1414c8]' : ''}`}>{name}</td>
              <td className={`border border-[#808080] text-right whitespace-nowrap ${pad}`}>{value}</td>
              <td className="border border-[#808080] text-center">{unit}</td>
            </tr>
          ))}
        </React.Fragment>
      ))}
    </tbody>
  </table>
);

const Sidebar = () => (
  <aside className="flex w-[240px] shrink-0 flex-col border-r-2 border-[#8c8c8c] bg-[#f0f0f0] font-['Liberation_Sans',sans-serif]">
    <div className="flex h-[26px] shrink-0 items-center justify-between border-b border-[#666] pr-[6px] text-[12px]">
      <h2 className="font-bold text-black">Steel Connection Inspector</h2>
      <button aria-label="Close inspector" className="flex size-3 items-center justify-center bg-[#b0b0b0]">
        <svg viewBox="0 0 10 10" className="size-2.5"><path d="M1 1l8 8M9 1L1 9" stroke="#666" /></svg>
      </button>
    </div>
    <section className="mr-[5px] flex h-[467px] shrink-0 flex-col border-r border-b border-[#777] pr-1 pb-2">
      <div className="flex h-7 shrink-0 items-center pl-[7px]">
        <button aria-label="Delete"><Icon name="cross2" className="size-3" /></button>
        <button aria-label="Verify" className="ml-3"><Icon name="docCheck" className="size-[13px]" /></button>
        <button aria-label="Help" className="ml-[18px]"><Icon name="help" className="size-[14px]" /></button>
      </div>
      <div className="flex grow flex-col border-t border-l-2 border-[#777] bg-white">
        <ConnectionTree />
        <div className="mt-auto flex h-4 items-center bg-[#f0f0f0] px-0.5">
          <Chevron dir="left" />
          <div className="ml-[3px] h-4 w-[92px] bg-[#c0c0c0]" />
          <span className="ml-auto"><Chevron dir="right" /></span>
        </div>
      </div>
    </section>
    <FolderTab>Steel connections</FolderTab>
    <div className="mt-1 mr-[5px] flex grow justify-between border-y border-[#666]">
      <PropertyTable />
      <div className="flex w-[17px] flex-col items-center">
        <div className="flex h-4 items-center"><Chevron dir="up" /></div>
        <div className="w-[15px] grow bg-[#a6a6a6]" />
        <div className="flex h-[17px] items-center"><Chevron dir="down" /></div>
      </div>
    </div>
    <FolderTab>Properties</FolderTab>
    <div className="flex h-[21px] shrink-0 items-center border-b border-[#b0b0b0] pb-0.5">
      {['treeTab', 'flagTab', 'boltTab', 'layersTab'].map((name) => (
        <button key={name} aria-label={name} className="flex h-[18px] w-[23px] items-center justify-center border-r border-b border-black">
          <Icon name={name} className="size-3" />
        </button>
      ))}
    </div>
    <div className="h-0.5 shrink-0" />
  </aside>
);

// ---------------------------------------------------------------- results note

const Formula = ({ text }) =>
  text.split(/([_^]\{[^}]*\})/).map((part, i) => {
    if (part.startsWith('_{')) return <sub key={i} className="static align-[-6px] text-[11px]">{part.slice(2, -1)}</sub>;
    if (part.startsWith('^{')) return <sup key={i} className="static align-[5px] text-[11px]">{part.slice(2, -1)}</sup>;
    return part;
  });

const rowHeight = (row) => {
  if (!row) return 'h-[15px]';
  if (row[0] === 'm =') return 'h-[17px]';
  if (row[0].includes('^')) return 'h-6';
  return row.length === 1 ? 'h-[21px]' : 'h-[22px]';
};

const ResultTable = ({ caption, rows, className }) => (
  <section className={className}>
    <h3 className="h-5 pt-px font-bold"><Formula text={caption} /></h3>
    <table className="w-full table-fixed">
      <colgroup>
        <col className="w-[160px]" /><col className="w-[107px]" /><col className="w-[161px]" /><col /><col className="w-[120px]" />
      </colgroup>
      <tbody>
        {rows.map((row, i) => (
          <tr key={i} className={rowHeight(row)}>
            {row && row.length === 1 && (
              <td colSpan={5} className={`pl-3 whitespace-nowrap ${row[0].includes('^') ? 'pb-px' : 'pb-[3px]'}`}><Formula text={row[0]} /></td>
            )}
            {row && row.length > 1 && (
              <>
                <td className={`pl-3 whitespace-nowrap ${row[0].includes('_') ? 'pb-[3px]' : ''}`}><Formula text={row[0]} /></td>
                <td className="text-right font-['Liberation_Mono',monospace] text-[#333]">{row[1]}</td>
                <td className="text-center">{row[2]}</td>
                <td>{row[3]}</td>
                <td className="pr-px text-right">{row[4]}</td>
              </>
            )}
          </tr>
        ))}
      </tbody>
    </table>
  </section>
);

const NoteHeading = ({ children, className = '' }) => (
  <h2 className={`w-fit border-b border-black text-[15px] leading-[17px] font-bold uppercase first-letter:text-[19px] ${className}`}>{children}</h2>
);

const TABS = ['Scheme', 'Connection View', 'Structure', 'Results'];

const ResultsPane = () => (
  <main className="flex min-w-0 grow flex-col border-t border-[#666] bg-[#f0f0f0] font-['Liberation_Sans',sans-serif]">
    <div role="tablist" className="flex h-[23px] shrink-0 items-end border-b border-[#777] text-[11px] text-[#222]">
      {TABS.map((tab) => (
        <button
          key={tab}
          role="tab"
          aria-selected={tab === 'Results'}
          className={tab === 'Results' ? 'h-[21px] bg-white pr-1.5 pb-[3px] pl-1' : 'h-5 border-r border-[#d4d4d4] px-[5px] pb-px first:pl-1.5'}
        >
          {tab}
        </button>
      ))}
    </div>
    <div className="flex grow border-l border-[#808080]">
      <article className="flex min-w-0 grow flex-col bg-white pr-2 pb-1.5 pl-[9px] text-[12px] leading-3 text-black">
        <NoteHeading>Connection stiffness</NoteHeading>
        <ResultTable caption="Bending moment M_{j,Ed,y}" rows={RESULTS_Y} className="mt-[11px]" />
        <ResultTable caption="Bending moment M_{j,Ed,z}" rows={RESULTS_Z} className="mt-[17px]" />
        <NoteHeading className="mt-[27px]">Weakest component:</NoteHeading>
        <p className="mt-[11px] pl-3 leading-4">FOUNDATION - BEARING PRESSURE ONTO CONCRETE</p>
        <div className="mt-auto flex h-8 items-center justify-between border border-[#dcdcdc] bg-[#eee] pr-[156px] pl-1 text-[19px]">
          <strong className="text-[#0a7a12]">Connection conforms to the code</strong>
          <span>Ratio <span className="font-['Liberation_Mono',monospace] text-[#444]">0.53</span></span>
        </div>
      </article>
      <div className="flex w-5 shrink-0 flex-col items-center pt-2.5 pr-0.5 pb-2.5">
        <Chevron dir="up" big />
        <div className="mt-auto mb-1 h-32 w-4 bg-[#cdcdcd]" />
        <Chevron dir="down" big />
      </div>
    </div>
    <div className="flex h-[17px] shrink-0 items-center border-l border-[#808080] pr-[30px] pl-2.5">
      <Chevron dir="left" big />
      <div className="mr-1 ml-0.5 h-4 grow bg-[#cdcdcd]" />
      <Chevron dir="right" big />
    </div>
    <div className="flex h-[21px] shrink-0 items-center gap-[3px] border-t border-b border-t-white border-b-[#ccc]">
      <button aria-label="Edit note" className="flex h-[18px] w-[22px] items-center justify-center border border-t-white border-l-white border-[#999]"><Icon name="popOut" className="size-[14px]" /></button>
      <button aria-label="Word"><Icon name="word" className="size-4" /></button>
      <button aria-label="Excel"><Icon name="excel" className="size-4" /></button>
    </div>
    <div className="h-px shrink-0" />
  </main>
);

const Strip = ({ groups }) => (
  <div className="flex flex-col border-y border-[#b4b4b4] bg-[#f0f0f0]">
    <span className="mx-0.5 my-[2px] border-t-2 border-dotted border-[#b8b8b8]" />
    {groups.map(([height, names], i) => (
      <div key={i} className={`flex flex-col ${height} ${i > 0 ? 'mt-1.5' : ''}`}>
        {names.map((name) => (
          <button key={name} aria-label={name} className="flex flex-1 items-center justify-center"><Icon name={name} className="size-[18px]" /></button>
        ))}
      </div>
    ))}
  </div>
);

const RightStrips = () => (
  <div className="flex w-8 shrink-0 flex-col border-t border-[#ccc] bg-white pt-2">
    <Strip
      groups={[
        ['h-[86px]', ['column', 'columnBase', 'greyTee']],
        ['h-[284px]', ['splice', 'knee', 'tee', 'greyTank', 'pipeH', 'pipeV', 'webPlate', 'beamClip', 'endPlate', 'hBeam']],
        ['h-[143px]', ['fan', 'flange', 'pyramid', 'cross', 'dome']],
      ]}
    />
    <div className="h-12" />
    <Strip groups={[['h-[115px]', ['pageSave', 'pageMail', 'pageWord', 'pageExcel']]]} />
  </div>
);

const App = () => (
  <div className="flex h-screen flex-col overflow-hidden bg-[#f0f0f0] font-['Open_Sans','Noto_Sans',sans-serif]">
    <TitleBar />
    <MenuBar />
    <Toolbars />
    <div className="flex min-h-0 grow">
      <Sidebar />
      <ResultsPane />
      <RightStrips />
    </div>
  </div>
);

export default App;
